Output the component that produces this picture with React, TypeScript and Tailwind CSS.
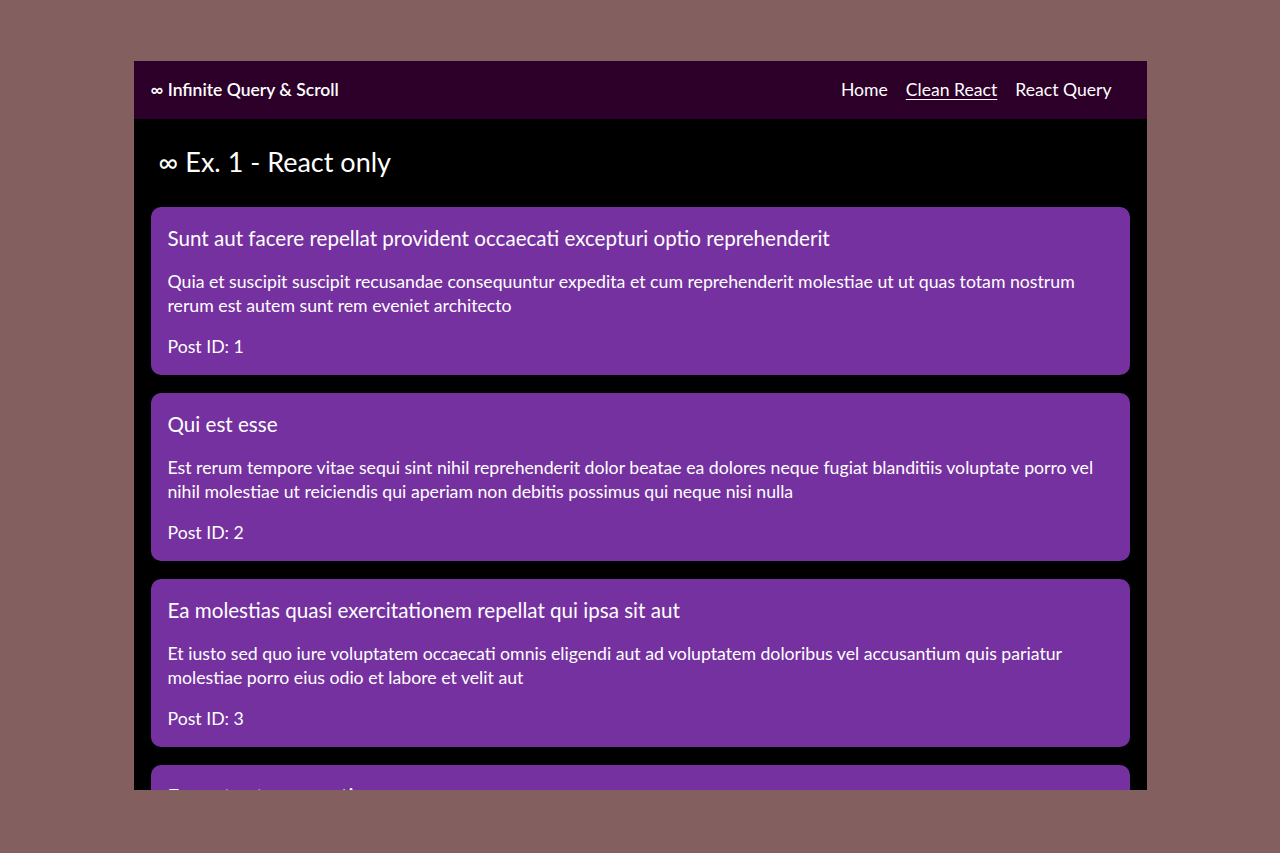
import React from "react";

const posts = [
  {
    id: 1,
    title: "Sunt aut facere repellat provident occaecati excepturi optio reprehenderit",
    body: "Quia et suscipit suscipit recusandae consequuntur expedita et cum reprehenderit molestiae ut ut quas totam nostrum rerum est autem sunt rem eveniet architecto",
  },
  {
    id: 2,
    title: "Qui est esse",
    body: "Est rerum tempore vitae sequi sint nihil reprehenderit dolor beatae ea dolores neque fugiat blanditiis voluptate porro vel nihil molestiae ut reiciendis qui aperiam non debitis possimus qui neque nisi nulla",
  },
  {
    id: 3,
    title: "Ea molestias quasi exercitationem repellat qui ipsa sit aut",
    body: "Et iusto sed quo iure voluptatem occaecati omnis eligendi aut ad voluptatem doloribus vel accusantium quis pariatur molestiae porro eius odio et labore et velit aut",
  },
  {
    id: 4,
    title: "Eum et est occaecati",
    body: "Ullam et saepe reiciendis voluptatem adipisci sit amet autem assumenda provident rerum culpa quis hic commodi nesciunt rem tenetur doloremque ipsam iure quis sunt voluptatem rerum illo velit",
  },
];

export default function App() {
  return (
    <div
      className="min-h-[853px] w-full bg-[#845f5f] pt-[61px]"
      style={{ fontFamily: "Lato, 'Noto Sans', sans-serif" }}
    >
      <div className="mx-auto flex h-[729px] w-[1013px] flex-col overflow-hidden bg-black text-white">
        <header className="flex h-[58px] shrink-0 items-center justify-between bg-[#2d0029] pl-[17px] pr-[35px]">
          <div className="text-[17.5px] font-semibold">∞ Infinite Query &amp; Scroll</div>
          <nav className="flex gap-[18px] text-[17.6px]">
            <a>Home</a>
            <a className="underline underline-offset-[3px]">Clean React</a>
            <a>React Query</a>
          </nav>
        </header>
        <main className="flex-1 overflow-hidden px-[17px]">
          <h1 className="mt-[25px] mb-[27px] pl-[8px] text-[27px] leading-[36px]">∞ Ex. 1 - React only</h1>
          <div className="flex flex-col gap-[18px]">
            {posts.map((p) => (
              <article key={p.id} className="rounded-[10px] bg-[#7531a0] px-[17px] pt-[18px] pb-[16px]">
                <h2 className="text-[20.6px] leading-[26px]">{p.title}</h2>
                <p className="mt-[19px] text-[17.7px] leading-[24px]">{p.body}</p>
                <p className="mt-[17px] text-[17.7px] leading-[24px]">Post ID: {p.id}</p>
              </article>
            ))}
          </div>
        </main>
      </div>
    </div>
  );
}
